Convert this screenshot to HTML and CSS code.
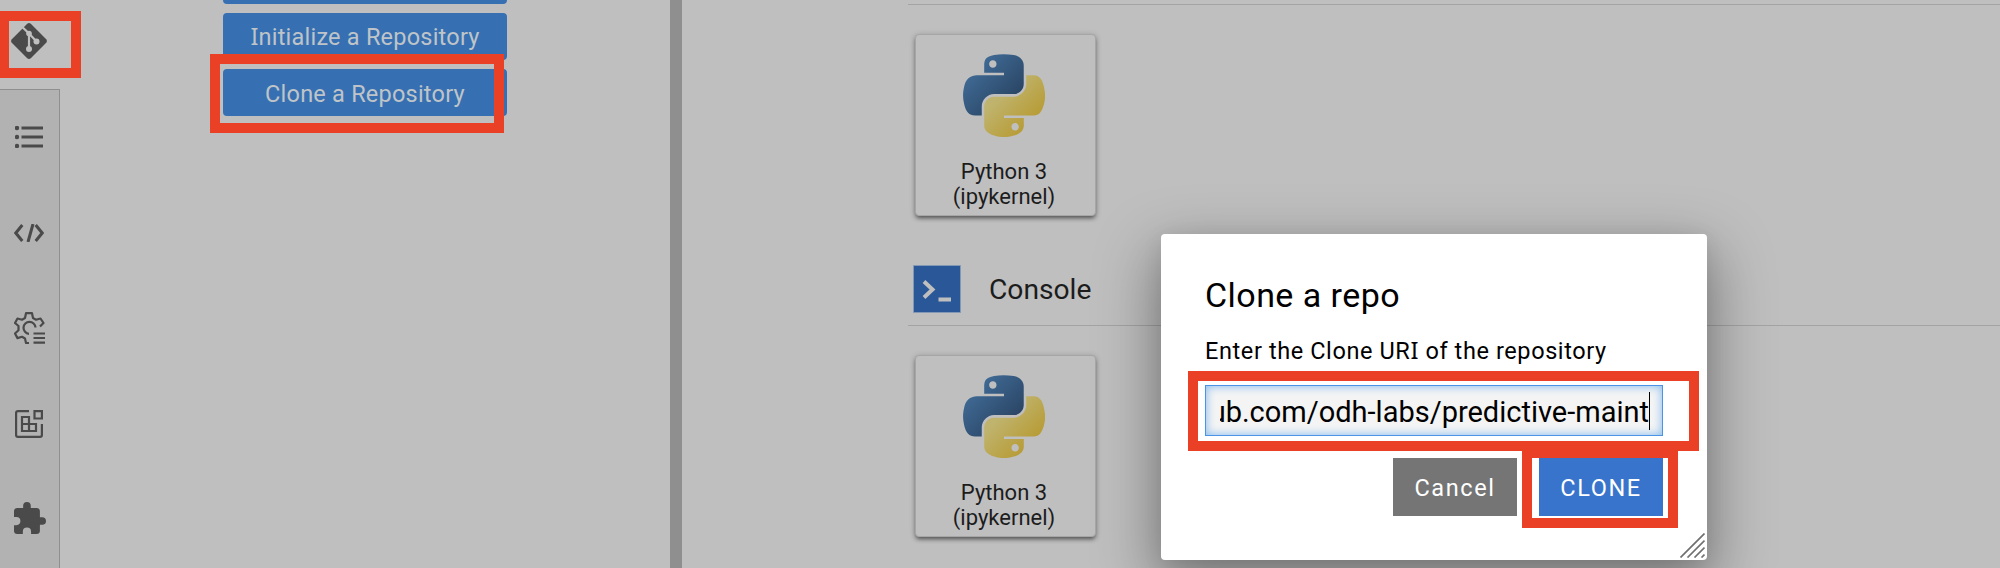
FILE: index.html
```html
<!DOCTYPE html>
<html lang="en">
<head>
<meta charset="utf-8">
<title>JupyterLab</title>
<link rel="stylesheet" href="styles.css">
</head>
<body>
<svg width="0" height="0" class="defs">
  <defs>
    <linearGradient id="blue" x1="0" y1="0" x2="1" y2="1"><stop offset="0.1" stop-color="#43709d"/><stop offset="0.8" stop-color="#2a4564"/></linearGradient>
    <linearGradient id="gold" x1="0" y1="0" x2="1" y2="1"><stop offset="0.3" stop-color="#bfb36d"/><stop offset="0.75" stop-color="#b89d38"/></linearGradient>
    <symbol id="python" viewBox="0 0 111 112">
      <path fill="url(#blue)" d="M54.9 0C50.300 0 46 .4 42.100 1.100 30.800 3.100 28.700 7.300 28.700 15v10.200h26.800v3.400H18.700c-7.800 0-14.600 4.700-16.700 13.600-2.500 10.200-2.600 16.600 0 27.300 1.900 7.900 6.500 13.600 14.200 13.600h9.200V70.800c0-8.800 7.700-16.700 16.700-16.700h26.700c7.500 0 13.400-6.100 13.400-13.600V15c0-7.300-6.100-12.700-13.400-13.900C64.200.3 59.500 0 54.900 0zM40.400 8.200c2.800 0 5 2.300 5 5.100s-2.200 5.100-5 5.100-5-2.300-5-5.100 2.200-5.100 5-5.100z"/>
      <path fill="url(#gold)" d="M85.600 28.700v11.900c0 9.200-7.800 17-16.700 17H42.100c-7.300 0-13.400 6.300-13.400 13.600v25.500c0 7.300 6.300 11.500 13.400 13.600 8.500 2.500 16.600 2.900 26.800 0 6.700-1.900 13.400-5.800 13.400-13.600V86.500H55.500v-3.400h40.200c7.800 0 10.700-5.400 13.400-13.600 2.800-8.400 2.700-16.500 0-27.300-1.900-7.700-5.600-13.600-13.400-13.600zM70.600 93.300c2.800 0 5 2.300 5 5.100s-2.200 5.100-5 5.100-5-2.300-5-5.100 2.200-5.100 5-5.100z"/>
    </symbol>
  </defs>
</svg>
<div class="app">
  <nav class="rail">
    <div class="tab active">
      <svg width="36" height="36" viewBox="0 0 36 36"><path fill="#4a4a4a" d="M16.200.8Q18-.6 19.800.8L35.200 16.200Q36.600 18 35.200 19.800L19.800 35.200Q18 36.600 16.200 35.200L.8 19.800Q-.6 18 .8 16.200L11.800 5.200Z"/><g fill="none" stroke="#bfbfbf" stroke-width="2.200"><path d="M11 3.800 18 10.500V26M18 10.500 25 18"/></g><g fill="#bfbfbf"><circle cx="18" cy="10.500" r="2.800"/><circle cx="18" cy="26" r="3"/><circle cx="25.500" cy="18.500" r="3"/></g></svg>
    </div>
    <div class="tabs">
      <svg class="i-list" width="28" height="22" viewBox="0 0 28 22" fill="#4a4a4a"><circle cx="2" cy="2" r="2.200"/><circle cx="2" cy="11" r="2.200"/><circle cx="2" cy="20" r="2.200"/><path d="M6.500.5H28v3H6.500zM6.500 9.500H28v3H6.500zM6.500 18.500H28v3H6.500z"/></svg>
      <svg class="i-code" width="30" height="18" viewBox="0 0 30 18" fill="none" stroke="#4a4a4a" stroke-width="3"><path d="M8.300 1 1.800 9l6.500 8M21.700 1l6.500 8-6.500 8M19 0l-5 18"/></svg>
      <svg class="i-gear" width="31" height="32" viewBox="0 0 31 32" fill="none" stroke="#4a4a4a" stroke-width="2.200" stroke-linejoin="round"><path d="M15 31h-3l-1-4.500-3-1.700-4.500 1.300L1 21.500 4.500 18.200V14L1 11l2.500-4.500L8 7.700l3-1.700 1-4.800h6L19 6l3 1.700 4.500-1.200L29.500 11 26 14.500M15 21.800A6 6 0 1 1 21.500 15.500"/><path d="M19.500 21.500H31M19.500 26H31M19.500 30.700H31"/></svg>
      <svg class="i-ext" width="28" height="28" viewBox="0 0 28 28" fill="none" stroke="#4a4a4a" stroke-width="2.200"><path d="M14 1.100H3Q1.100 1.100 1.100 3v22q0 1.900 1.900 1.900h22q1.900 0 1.900-1.900V14M19.500 1.100H26.900v7.400H19.500zM7 7h7v14H7zM7 14h14v7H7z"/></svg>
      <svg class="i-puzzle" width="32" height="32" viewBox="2 1 21 21" fill="#4a4a4a"><path d="M20.500 11H19V7c0-1.100-.9-2-2-2h-4V3.500a2.500 2.500 0 0 0-5 0V5H4c-1.100 0-2 .9-2 2v3.800h1.500a2.700 2.700 0 0 1 0 5.400H2V20c0 1.100.9 2 2 2h3.800v-1.500a2.700 2.700 0 0 1 5.400 0V22H17c1.100 0 2-.9 2-2v-4h1.500a2.500 2.500 0 0 0 0-5z"/></svg>
    </div>
  </nav>
  <section class="panel">
    <div class="btn"></div>
    <div class="btn"><span><span class="slab">I</span>nitialize a Repository</span></div>
    <div class="btn last"><span>Clone a Repository</span></div>
  </section>
  <div class="divider"></div>
  <main class="launcher">
    <div class="rule"></div>
    <div class="card">
      <svg width="82" height="83"><use href="#python"/></svg>
      <div class="label"><div>Python 3</div><div>(ipykernel)</div></div>
    </div>
    <header class="section">
      <svg width="48" height="48" viewBox="0 0 48 48"><path fill="#2a5797" stroke="#8398b5" d="M.5.500h47v47H.5z"/><path fill="none" stroke="#bfbfbf" stroke-width="4" d="m11 16.500 8.500 8L11 32.500M25.500 34.500H38"/></svg>
      <span>Console</span>
    </header>
    <div class="card">
      <svg width="82" height="83"><use href="#python"/></svg>
      <div class="label"><div>Python 3</div><div>(ipykernel)</div></div>
    </div>
  </main>
</div>
<div class="dialog">
  <div class="title"><span>Clone a repo</span></div>
  <div class="hint"><span>Enter the Clone UR<span class="slab">I</span> of the repository</span></div>
  <div class="field"><div class="clip"><span>ub.com/odh-labs/predictive-maint</span></div><i class="caret"></i></div>
  <div class="actions">
    <div class="action cancel"><span>Cancel</span></div>
    <div class="action clone"><span>CLONE</span></div>
  </div>
  <svg class="grip" width="25" height="25" viewBox="0 0 25 25" fill="none" stroke="#707070" stroke-width="1.700"><path d="M.5 24.500 24.500.5M7.500 24.500l17-17M14.500 24.500l10-10M21.500 24.500l3-3"/></svg>
</div>
<div class="mark m-git"></div>
<div class="mark m-repo"></div>
<div class="mark m-field"></div>
<div class="mark m-clone"></div>
</body>
</html>
```
FILE: styles.css
```css
* { box-sizing: border-box; }
body {
  margin: 0;
  width: 2000px;
  height: 568px;
  overflow: hidden;
  position: relative;
  background: #bfbfbf;
  color: #1c1c1c;
  font-family: Roboto, "Noto Sans", sans-serif;
  font-size: 23.500px;
}
svg { display: block; flex: none; }
span { white-space: nowrap; }
.slab { font-family: "Noto Sans", sans-serif; line-height: 1; }
.defs { position: absolute; }
.app { display: flex; height: 568px; overflow: hidden; }

.rail { width: 60px; display: flex; flex-direction: column; }
.tab.active { height: 89px; padding: 23px 0 0 11px; }
.tabs {
  flex: 1;
  background: #b2b2b2;
  border-top: 1px solid #8f8f8f;
  border-right: 1px solid #8f8f8f;
  padding: 36px 0 0 14px;
  display: flex;
  flex-direction: column;
}
.i-list { margin-left: 1px; }
.i-code { margin-top: 76px; }
.i-gear { margin-top: 70px; }
.i-ext { margin: 66px 0 0 1px; }
.i-puzzle { margin-top: 64px; }

.panel {
  width: 610px;
  padding-left: 163px;
  margin-top: -43px;
  display: flex;
  flex-direction: column;
  gap: 9px;
}
.btn {
  flex: none;
  width: 284px;
  height: 47px;
  border-radius: 4px;
  background: #3670b2;
  color: #bfc4c9;
  line-height: 48px;
  text-align: center;
  letter-spacing: .22px;
}
.btn.last { line-height: 50px; }
.divider { width: 12px; background: #8f8f8f; }

.launcher { flex: 1; padding: 4px 0 0 226px; }
.rule { height: 1px; background: #a4a4a4; }
.card {
  width: 181px;
  height: 182px;
  margin: 29px 0 0 7px;
  border: 1px solid #a6a6a6;
  border-radius: 4px;
  background: #bfbfbf;
  box-shadow: 0 3px 4px -1px rgba(0,0,0,.5), 0 1px 6px rgba(0,0,0,.2);
  display: flex;
  flex-direction: column;
  align-items: center;
  padding: 19px 3px 0 0;
}
.label { margin-top: 22px; text-align: center; line-height: 25px; font-size: 22px; }
.section {
  height: 110px;
  border-bottom: 1px solid #a4a4a4;
  padding: 49px 0 0 5px;
  display: flex;
  gap: 28px;
  font-size: 28.200px;
  line-height: 50px;
}

.dialog {
  position: absolute;
  left: 1161px;
  top: 234px;
  width: 546px;
  height: 326px;
  padding: 36px 44px 0;
  border-radius: 4px;
  background: #fff;
  color: #000;
  box-shadow: 0 22px 60px 6px rgba(0,0,0,.36), 0 4px 20px rgba(0,0,0,.08);
}
.title { height: 52px; line-height: 50px; font-size: 34px; letter-spacing: .45px; }
.hint { height: 63px; line-height: 59px; letter-spacing: .6px; }
.field {
  height: 51px;
  display: flex;
  border: 1px solid #4b93e4;
  background: #f4f4f4;
  box-shadow: inset 0 0 9px 1px #90c0ee;
  padding: 0 12px 0 14px;
  font-size: 29px;
  line-height: 53px;
}
.clip { width: 430px; height: 49px; overflow: hidden; display: flex; justify-content: flex-end; }
.caret { width: 1px; height: 38px; margin-top: 6px; background: #000; }
.actions { margin-top: 22px; display: flex; justify-content: flex-end; gap: 22px; }
.action { width: 124px; height: 58px; line-height: 60px; text-align: center; color: #fff; letter-spacing: 1.600px; }
.cancel { background: #757575; }
.clone { background: #3974cc; }
.grip { position: absolute; right: 2px; bottom: 2px; }

.mark { position: absolute; border: 10px solid #ea4126; }
.m-git { left: -1px; top: 11px; width: 82px; height: 67px; }
.m-repo { left: 210px; top: 54px; width: 294px; height: 79px; }
.m-field { left: 1188px; top: 371px; width: 511px; height: 80px; }
.m-clone { left: 1522px; top: 448px; width: 156px; height: 80px; }
```
